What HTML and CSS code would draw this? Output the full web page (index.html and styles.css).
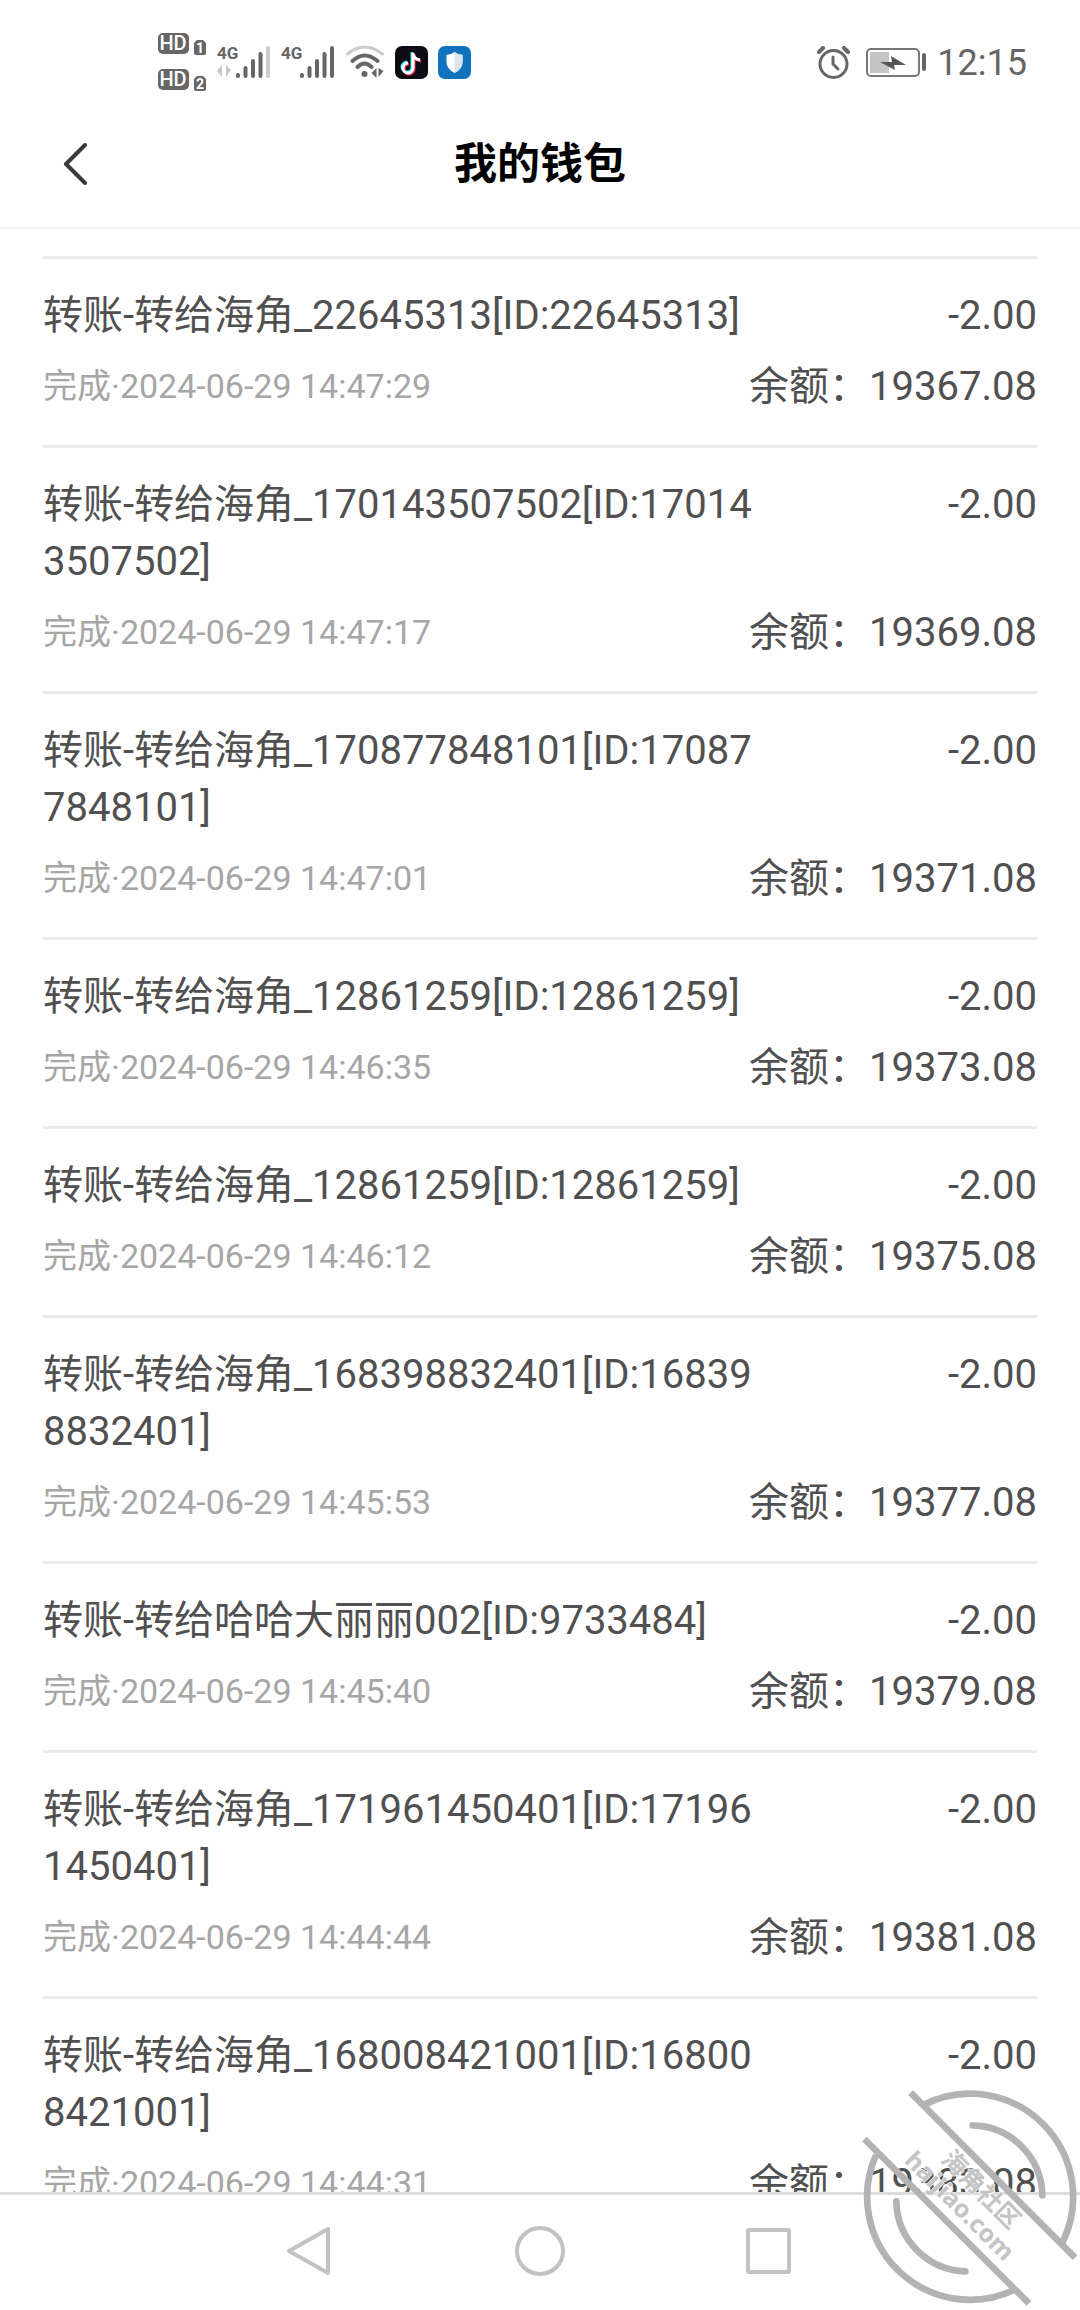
FILE: index.html
```html
<!DOCTYPE html>
<html lang="zh-CN">
<head>
<meta charset="utf-8">
<meta name="viewport" content="width=device-width, initial-scale=1">
<title>我的钱包</title>
<link rel="stylesheet" href="styles.css">
</head>
<body>
<div class="app">
  <div class="status">
    <div class="status-group">
      <svg class="icon-hd" viewBox="0 0 49 58" aria-label="HD">
        <g fill="#666">
          <rect x="0" y="0" width="31" height="21" rx="5"/>
          <path d="M39 7h6l3 3v10a2 2 0 0 1-2 2h-8a2 2 0 0 1-2-2V10z"/>
          <rect x="0" y="36" width="31" height="21" rx="5"/>
          <path d="M39 43h6l3 3v10a2 2 0 0 1-2 2h-8a2 2 0 0 1-2-2V46z"/>
        </g>
        <text class="hd-text" x="15" y="17" text-anchor="middle">HD</text>
        <text class="hd-num" x="42" y="20" text-anchor="middle">1</text>
        <text class="hd-text" x="15" y="53" text-anchor="middle">HD</text>
        <text class="hd-num" x="42" y="56" text-anchor="middle">2</text>
      </svg>
      <svg class="icon-signal" viewBox="0 0 54 34" aria-label="4G">
        <text class="net-text" x="0" y="14">4G</text>
        <path d="M0 26l5-6v12M9 20v12l5-7z" fill="#c8c8c8"/>
        <g stroke="#666" stroke-width="4" stroke-linecap="round">
          <path d="M21 31v-1M28.500 31v-8M36 31V16M43.500 31V9"/>
          <path d="M51 31V3" stroke="#ccc"/>
        </g>
      </svg>
      <svg class="icon-signal" viewBox="0 0 54 34" aria-label="4G">
        <text class="net-text" x="0" y="14">4G</text>
        <path d="M21 31v-1M28.500 31v-8M36 31V16M43.500 31V9M51 31V3" stroke="#666" stroke-width="4" stroke-linecap="round"/>
      </svg>
      <svg class="icon-wifi" viewBox="0 0 39 34" fill="none" stroke-linecap="round" aria-label="WLAN">
        <path d="M2 9Q19-5 37 9" stroke="#ccc" stroke-width="3"/>
        <path d="M7 16Q19 5 32 16" stroke="#666" stroke-width="4"/>
        <path d="M12 22Q19 15 26 22" stroke="#666" stroke-width="4"/>
        <circle cx="19" cy="29" r="3" fill="#666"/>
        <path d="M26 28l5-5v10M33 23v9l5-6z" fill="#666"/>
      </svg>
      <svg class="icon-app" viewBox="0 0 33 33" aria-label="抖音">
        <rect width="33" height="33" rx="7" fill="#0d0b14"/>
        <g fill="none" stroke-width="3">
          <path d="M17 6v15a5 5 0 1 1-5-5M17 8q1 5 7 6" stroke="#25f4ee"/>
          <path d="M19 8v15a5 5 0 1 1-5-5M19 9q1 5 7 6" stroke="#fe2c55"/>
          <path d="M18 7v15a5 5 0 1 1-5-5M18 8q1 5 7 6" stroke="#fff"/>
        </g>
      </svg>
      <svg class="icon-app" viewBox="0 0 33 33" aria-label="手机管家">
        <rect width="33" height="33" rx="7" fill="#1173bd"/>
        <path d="M16.500 6q4 3 8 3v7q0 7-8 11-8-4-8-11V9q4 0 8-3z" fill="#fff"/>
        <path d="M16.500 6q4 3 8 3v7q0 7-8 11z" fill="#d9e4ef"/>
      </svg>
    </div>
    <div class="status-group">
      <svg class="icon-alarm" viewBox="0 0 39 33" fill="none" stroke="#666" stroke-linecap="round" aria-label="闹钟">
        <circle cx="16.500" cy="18" r="13.500" stroke-width="3"/>
        <path d="M16 11v7l5 5" stroke-width="3"/>
        <path d="M2 6l4-4M31 6l-4-4" stroke-width="4"/>
      </svg>
      <svg class="icon-battery" viewBox="0 0 61 29" aria-label="充电中">
        <rect x="1" y="1" width="52" height="27" rx="4" fill="none" stroke="#777" stroke-width="2"/>
        <rect x="4" y="4" width="19" height="21" fill="#c4c4c4"/>
        <path d="M14 14h12l-1-6 15 9H28l1 5z" fill="#555"/>
        <rect x="56" y="5" width="4" height="18" rx="2" fill="#666"/>
      </svg>
      <time class="clock">12:15</time>
    </div>
  </div>

  <header class="header">
    <button class="back" type="button" aria-label="返回">
      <svg viewBox="0 0 24 42" fill="none" stroke="#3a3a3a" stroke-width="4" stroke-linecap="round" stroke-linejoin="round"><path d="M22 2L3 21l19 19"/></svg>
    </button>
    <h1 class="title">我的钱包</h1>
  </header>

  <main class="content">
    <ul class="records">
      <li class="record">
        <div class="row"><p class="name">转账-转给海角_22645313[ID:22645313]</p><p>-2.00</p></div>
        <div class="row"><p class="date">完成·2024-06-29 14:47:29</p><p>余额：19367.08</p></div>
      </li>
      <li class="record">
        <div class="row"><p class="name">转账-转给海角_170143507502[ID:170143507502]</p><p>-2.00</p></div>
        <div class="row"><p class="date">完成·2024-06-29 14:47:17</p><p>余额：19369.08</p></div>
      </li>
      <li class="record">
        <div class="row"><p class="name">转账-转给海角_170877848101[ID:170877848101]</p><p>-2.00</p></div>
        <div class="row"><p class="date">完成·2024-06-29 14:47:01</p><p>余额：19371.08</p></div>
      </li>
      <li class="record">
        <div class="row"><p class="name">转账-转给海角_12861259[ID:12861259]</p><p>-2.00</p></div>
        <div class="row"><p class="date">完成·2024-06-29 14:46:35</p><p>余额：19373.08</p></div>
      </li>
      <li class="record">
        <div class="row"><p class="name">转账-转给海角_12861259[ID:12861259]</p><p>-2.00</p></div>
        <div class="row"><p class="date">完成·2024-06-29 14:46:12</p><p>余额：19375.08</p></div>
      </li>
      <li class="record">
        <div class="row"><p class="name">转账-转给海角_168398832401[ID:168398832401]</p><p>-2.00</p></div>
        <div class="row"><p class="date">完成·2024-06-29 14:45:53</p><p>余额：19377.08</p></div>
      </li>
      <li class="record">
        <div class="row"><p class="name">转账-转给哈哈大丽丽002[ID:9733484]</p><p>-2.00</p></div>
        <div class="row"><p class="date">完成·2024-06-29 14:45:40</p><p>余额：19379.08</p></div>
      </li>
      <li class="record">
        <div class="row"><p class="name">转账-转给海角_171961450401[ID:171961450401]</p><p>-2.00</p></div>
        <div class="row"><p class="date">完成·2024-06-29 14:44:44</p><p>余额：19381.08</p></div>
      </li>
      <li class="record">
        <div class="row"><p class="name">转账-转给海角_168008421001[ID:168008421001]</p><p>-2.00</p></div>
        <div class="row"><p class="date">完成·2024-06-29 14:44:31</p><p>余额：19383.08</p></div>
      </li>
    </ul>
  </main>

  <nav class="navbar">
    <button class="nav-btn" type="button" aria-label="返回"><svg viewBox="0 0 50 50"><path d="M4 25L43 3v44z"/></svg></button>
    <button class="nav-btn" type="button" aria-label="主页"><svg viewBox="0 0 50 50"><circle cx="25" cy="25" r="23"/></svg></button>
    <button class="nav-btn" type="button" aria-label="最近任务"><svg viewBox="0 0 50 50"><rect x="3" y="4" width="41" height="42" rx="1"/></svg></button>
  </nav>

  <svg class="watermark" viewBox="0 0 720 720" fill="none" stroke="#b3b3b3" stroke-width="20" aria-hidden="true">
    <path d="M250 105A309 309 0 0 1 665 522"/>
    <path d="M108 255A309 309 0 0 0 522 660"/>
    <path d="M398 166A214 214 0 0 1 607 376" stroke-linecap="round"/>
    <path d="M169 394A214 214 0 0 0 376 604" stroke-linecap="round"/>
    <text class="mark-text mark-cn" transform="translate(424 358) rotate(45)" text-anchor="middle" y="26">海角社区</text>
    <text class="mark-text" transform="translate(355 412) rotate(45)" text-anchor="middle" y="20">haijiao.com</text>
    <path d="M212 68L705 563M73 207L567 700"/>
  </svg>
</div>
</body>
</html>
```

FILE: styles.css
```css
* { box-sizing: border-box; }

body {
  margin: 0;
  background: #fefefe;
  color: #505050;
  font-family: Roboto, "Noto Sans CJK SC", sans-serif;
}

h1, p, ul { margin: 0; padding: 0; }

button {
  padding: 0;
  border: 0;
  background: none;
}

svg { display: block; }

.app {
  position: relative;
  display: flex;
  flex-direction: column;
  height: 100vh;
  overflow: hidden;
}

/* Status bar */
.status {
  flex: none;
  display: flex;
  justify-content: space-between;
  align-items: center;
  height: 100px;
  padding: 24px 53px 0 158px;
}

.status-group {
  display: flex;
  align-items: center;
  gap: 10px;
}

.icon-hd { width: 49px; height: 58px; }
.icon-signal { width: 54px; height: 34px; }
.icon-wifi { width: 40px; height: 34px; }
.icon-app { width: 33px; height: 33px; }
.icon-alarm { width: 39px; height: 33px; }
.icon-battery { width: 61px; height: 29px; }

.hd-text { fill: #fff; font-size: 20px; font-weight: 500; }
.hd-num { fill: #fff; font-size: 14px; font-weight: 700; }
.net-text { fill: #666; font-size: 17px; font-weight: 700; }

.clock {
  padding-top: 2px;
  color: #666;
  font-size: 36px;
  line-height: 40px;
}

/* Page header */
.header {
  flex: none;
  display: grid;
  grid-template-columns: 1fr auto 1fr;
  align-items: center;
  height: 129px;
  padding: 0 63px;
  border-bottom: 2px solid #f3f3f3;
}

.back { width: 24px; height: 42px; }

.title {
  color: #000;
  font-size: 43px;
  font-weight: 700;
  line-height: 60px;
}

/* Transaction list */
.content {
  flex: 1 1 0;
  min-height: 0;
  overflow: hidden;
  padding: 27px 43px 0;
}

.records { list-style: none; }

.record {
  display: flex;
  flex-direction: column;
  gap: 14px;
  padding: 28px 0 30px;
  border-top: 3px solid #eaeaea;
  font-size: 40px;
  line-height: 57px;
}

.row {
  display: flex;
  justify-content: space-between;
}

.name {
  width: 73%;
  word-break: break-all;
}

.date {
  color: #a6a6a6;
  font-size: 34px;
}

/* System navigation */
.navbar {
  flex: none;
  display: flex;
  justify-content: center;
  gap: 180px;
  height: 118px;
  padding-bottom: 3px;
  border-top: 3px solid #dcdcdc;
}

.nav-btn { width: 50px; }

.nav-btn svg {
  width: 50px;
  height: 50px;
  fill: none;
  stroke: #c2c2c2;
  stroke-width: 4;
  stroke-linejoin: round;
}

/* Community stamp over the lower right corner */
.watermark {
  position: absolute;
  right: 0;
  bottom: 0;
  width: 240px;
  height: 240px;
  pointer-events: none;
}

.mark-text {
  fill: #c4c4c4;
  stroke: #fefefe;
  stroke-width: 4px;
  paint-order: stroke;
  font-family: "Noto Sans", "Noto Sans CJK SC", sans-serif;
  font-size: 74px;
  font-weight: 700;
}

.mark-cn { font-family: "Noto Sans CJK SC", sans-serif; }
```
